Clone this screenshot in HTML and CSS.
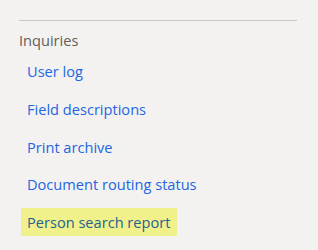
FILE: index.html
```html
<!DOCTYPE html>
<html lang="en">
<head>
    <meta charset="UTF-8" />
    <title>Inquiries</title>
    <link rel="stylesheet" href="styles.css">
</head>
<body>
    <div class="panel">
        <hr class="divider">
        <h3 class="group-title">Inquiries</h3>
        <ul class="links">
            <li><a href="#">User log</a></li>
            <li><a href="#">Field descriptions</a></li>
            <li><a href="#">Print archive</a></li>
            <li><a href="#">Document routing status</a></li>
            <li><a href="#" class="highlight">Person search report</a></li>
        </ul>
    </div>
</body>
</html>
```
FILE: styles.css
```css
body {
    font-family: 'Open Sans', 'Noto Sans', sans-serif;
    background-color: #f3f2f1;
    margin: 0;
}

.panel {
    padding: 20px 0 0 19px;
    width: 278px;
}

.divider {
    border: none;
    border-top: 1px solid #c8c6c4;
    margin: 0;
}

.group-title {
    margin: 0;
    padding-top: 5px;
    font-size: 14.6px;
    font-weight: normal;
    line-height: 28px;
    color: #605e5c;
}

.links {
    list-style-type: none;
    margin: 3px 0 0 2px;
    padding: 0;
    display: flex;
    flex-direction: column;
    gap: 9.75px;
}

.links a {
    display: inline-block;
    padding: 0 7px 0 6px;
    height: 28px;
    line-height: 28px;
    font-size: 14.6px;
    color: #2266e3;
    text-decoration: none;
}

.links a.highlight {
    background-color: #f1f18c;
    color: #25618f;
}
```
